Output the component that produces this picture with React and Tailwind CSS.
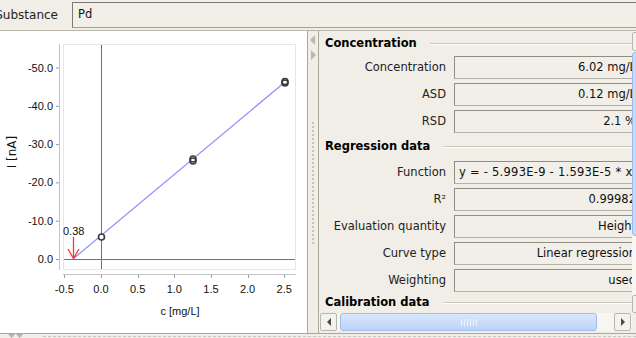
import React from 'react';

const yTicks = [0, 10, 20, 30, 40, 50];
const xTicks = [-0.5, 0, 0.5, 1, 1.5, 2, 2.5];
const px = (c) => 101 + c * 73.3;
const py = (v) => 260 - v * 3.83;

const Chart = () => (
  <svg width="307" height="300" viewBox="0 32 307 300" className="block">
    <rect x="63.5" y="45.5" width="232" height="225" fill="white" stroke="#e6e6e6" />
    <line x1="59.5" y1="45" x2="59.5" y2="271" stroke="#c4c4c4" />
    {yTicks.map((v) => (
      <g key={v}>
        <line x1="56" y1={py(v) + 0.5} x2="59" y2={py(v) + 0.5} stroke="#9a9a9a" />
        <text x="53" y={py(v) + 4} textAnchor="end" fontSize="11" fontFamily="Liberation Sans, sans-serif" fill="#111">
          {v === 0 ? '0.0' : `-${v}.0`}
        </text>
      </g>
    ))}
    <line x1="63" y1="275.5" x2="296" y2="275.5" stroke="#c4c4c4" />
    {xTicks.map((c) => (
      <g key={c}>
        <line x1={Math.round(px(c)) + 0.5} y1="276" x2={Math.round(px(c)) + 0.5} y2="279" stroke="#9a9a9a" />
        <text x={px(c)} y="294" textAnchor="middle" fontSize="11" fontFamily="Liberation Sans, sans-serif" fill="#111">
          {c.toFixed(1)}
        </text>
      </g>
    ))}
    <line x1="101.5" y1="46" x2="101.5" y2="270" stroke="#707070" />
    <line x1="64" y1="260.5" x2="295" y2="260.5" stroke="#707070" />
    <line x1="73" y1="260" x2="285" y2="83" stroke="#8c8cff" strokeWidth="1.2" />
    <line x1="73.5" y1="238" x2="73.5" y2="259" stroke="#ff3535" strokeWidth="1.3" />
    <polyline points="68,250 73.5,259.5 79,250" fill="none" stroke="#ff3535" strokeWidth="1.3" />
    <text x="63" y="236" fontSize="11" fontFamily="Liberation Sans, sans-serif" fill="#111">0.38</text>
    <circle cx="101.5" cy="238" r="3" fill="white" stroke="#3a3a3a" strokeWidth="1.6" />
    <circle cx="193" cy="160" r="3" fill="white" stroke="#3a3a3a" strokeWidth="1.6" />
    <circle cx="193" cy="162" r="3" fill="none" stroke="#3a3a3a" strokeWidth="1.6" />
    <circle cx="285" cy="82.5" r="3" fill="white" stroke="#3a3a3a" strokeWidth="1.6" />
    <circle cx="285" cy="84" r="3" fill="none" stroke="#3a3a3a" strokeWidth="1.6" />
    <text x="180" y="316" textAnchor="middle" fontSize="11" fontFamily="Liberation Sans, sans-serif" fill="#111">c [mg/L]</text>
    <text transform="translate(16 153) rotate(-90)" textAnchor="middle" fontSize="12" fontFamily="DejaVu Sans, sans-serif" fill="#111">I [nA]</text>
  </svg>
);

const Header = ({ title, className = '' }) => (
  <div className={`h-[20px] flex items-center gap-[13px] ${className}`}>
    <span className="font-bold text-[11.5px] text-black whitespace-nowrap">{title}</span>
    <div className="flex-1 border-t border-[#c9c6ba] border-b border-b-white" />
  </div>
);

const Row = ({ label, value, left = false, className = 'mt-[4px]' }) => (
  <div className={`flex items-center h-[23px] ${className}`}>
    <div className="w-[121px] shrink-0 text-right text-[11.5px] text-[#222] whitespace-nowrap">{label}</div>
    <div
      className={`ml-[8px] w-[187px] shrink-0 h-[23px] flex items-center overflow-hidden whitespace-nowrap text-[11.5px] text-[#111] bg-[#f1efe8] border border-[#b3b1a9] border-t-[#8f8d86] border-l-[#8f8d86] ${
        left ? 'justify-start pl-[4px] tracking-[0.25px]' : 'justify-end pr-[4px]'
      }`}
    >
      {value}
    </div>
  </div>
);

const Arrow = ({ dir }) => (
  <svg width="6" height="8" viewBox="0 0 6 8">
    {dir === 'left' ? <path d="M5 0 L1 4 L5 8 Z" fill="#4a4a4a" /> : <path d="M1 0 L5 4 L1 8 Z" fill="#4a4a4a" />}
  </svg>
);

export default function App() {
  return (
    <div className="w-[636px] h-[338px] overflow-hidden bg-[#f0eee6] flex flex-col font-['DejaVu_Sans',sans-serif]">
      {/* Substance */}
      <div className="h-[31px] shrink-0 flex items-start pt-[2px] border-b border-[#b9b6aa]">
        <div className="w-[58px] shrink-0 flex justify-end overflow-hidden h-[26px] items-center">
          <span className="text-[12px] text-[#222] whitespace-nowrap">Substance</span>
        </div>
        <div className="ml-[14px] h-[26px] w-[572px] shrink-0 flex items-center border border-[#a3a19a] border-t-[#7d7b75] border-l-[#7d7b75] bg-[#f1efe8]">
          <span className="pl-[5px] text-[11.5px] text-[#111] flex-1">Pd</span>
          <div className="w-[14px] h-[20px] mr-[-8px] border border-[#a6a49c] rounded-[2px] bg-[#f4f3ee] flex items-center pl-[3px]">
            <svg width="5" height="4" viewBox="0 0 5 4"><path d="M0 0 L5 0 L2.5 4 Z" fill="#444" /></svg>
          </div>
        </div>
      </div>

      <div className="h-[302px] shrink-0 flex">
        {/* chart */}
        <div className="w-[308px] shrink-0 bg-white border-r border-[#a9a79f]">
          <Chart />
        </div>

        {/* splitter */}
        <div className="w-[10px] shrink-0 flex flex-col items-center pt-[4px]">
          <svg width="6" height="10" viewBox="0 0 6 10"><path d="M5 0 L0 5 L5 10 Z" fill="#b9b7ae" /></svg>
          <svg width="6" height="10" viewBox="0 0 6 10" className="mt-[5px]"><path d="M1 0 L6 5 L1 10 Z" fill="#b9b7ae" /></svg>
          <div className="mt-[62px] h-[122px] border-l-2 border-dotted border-[#c4c1b5]" />
        </div>

        {/* properties */}
        <div className="flex-1 min-w-0 border-l border-[#a9a79f] flex flex-col">
          <div className="flex h-[282px] shrink-0">
            <div className="w-[313px] shrink-0 overflow-hidden pl-[6px]">
              <Header title="Concentration" className="mt-[3px]" />
              <Row label="Concentration" value="6.02 mg/L" className="mt-[2px]" />
              <Row label="ASD" value="0.12 mg/L" />
              <Row label="RSD" value="2.1 %" />
              <Header title="Regression data" className="mt-[4px]" />
              <Row label="Function" value="y = - 5.993E-9 - 1.593E-5 * x" left />
              <Row label="R²" value="0.99982" />
              <Row label="Evaluation quantity" value="Height" />
              <Row label="Curve type" value="Linear regression" />
              <Row label="Weighting" value="used" />
              <Header title="Calibration data" className="mt-[1px]" />
            </div>
            <div className="w-[17px] shrink-0 flex flex-col bg-[#f7f6f1]">
              <div className="h-[19px] mt-[1px] border border-[#b8b6ad] rounded-[2px] bg-[#f3f2ec]" />
              <div className="h-[184px] mt-[1px] rounded-[3px] bg-[#c4d9fa] border border-[#9fbbe9]" />
              <div className="flex-1" />
              <div className="h-[18px] border border-[#b8b6ad] rounded-[2px] bg-[#f3f2ec]" />
            </div>
          </div>
          {/* horizontal scrollbar */}
          <div className="h-[18px] w-[313px] shrink-0 flex items-stretch px-[1px] bg-[#f7f6f1]">
            <div className="w-[17px] shrink-0 border border-[#b8b6ad] rounded-[2px] bg-[#f3f2ec] flex items-center justify-center">
              <Arrow dir="left" />
            </div>
            <div className="ml-[3px] w-[257px] shrink-0 rounded-[3px] bg-gradient-to-b from-[#d9e7fd] to-[#bcd3f8] border border-[#a2bdea] flex items-center justify-center gap-[2px]">
              {[0, 1, 2, 3, 4, 5].map((i) => (
                <div key={i} className="w-px h-[7px] bg-[#eef4ff]" />
              ))}
            </div>
            <div className="flex-1" />
            <div className="w-[17px] shrink-0 border border-[#b8b6ad] rounded-[2px] bg-[#f3f2ec] flex items-center justify-center">
              <Arrow dir="right" />
            </div>
          </div>
          <div className="flex-1" />
        </div>
      </div>

      {/* bottom grip */}
      <div className="flex-1 border-t border-[#a9a79f] flex items-center pl-[8px] gap-[20px]">
        <div className="flex gap-[1px]">
          <svg width="7" height="4" viewBox="0 0 7 4"><path d="M0 0 L7 0 L3.5 4 Z" fill="#b3b1a8" /></svg>
          <svg width="7" height="4" viewBox="0 0 7 4"><path d="M0 0 L7 0 L3.5 4 Z" fill="#b3b1a8" /></svg>
        </div>
        <div className="flex-1 border-t border-dashed border-[#c8c5b9]" />
      </div>
    </div>
  );
}
